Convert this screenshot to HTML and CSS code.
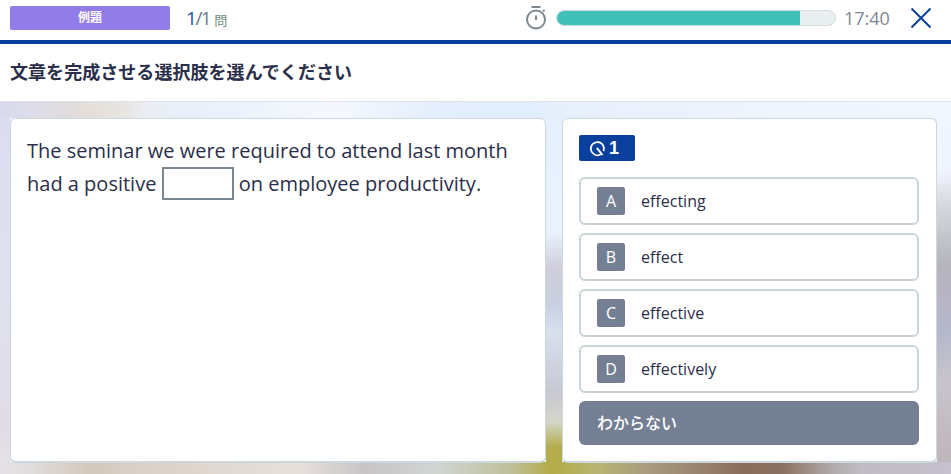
FILE: index.html
```html
<!DOCTYPE html>
<html lang="ja">
<head>
<meta charset="utf-8">
<title>例題</title>
<link rel="stylesheet" href="styles.css">
</head>
<body>
<header class="topbar">
  <div class="topbar-left">
    <div class="tag">例題</div>
    <div class="count"><span class="count-now">1</span><span class="count-total">/1</span><span class="count-unit">問</span></div>
  </div>
  <div class="topbar-right">
    <svg class="timer-icon" width="24" height="26" viewBox="0 0 24 26" fill="none" stroke="#7d8790" stroke-width="2">
      <path d="M7.500 2h9"/>
      <circle cx="12" cy="14.500" r="9"/>
      <path d="M12 10.500v4.500"/>
      <path d="M19 6.500l1.500-1.500"/>
    </svg>
    <div class="progress"><div class="progress-fill"></div></div>
    <div class="time">17:40</div>
    <svg class="close" width="22" height="22" viewBox="0 0 22 22" fill="none" stroke="#0b3f9d" stroke-width="2">
      <path d="M1.500 1.500l19 19M20.500 1.500l-19 19"/>
    </svg>
  </div>
</header>
<div class="title-bar"><h1 class="title">文章を完成させる選択肢を選んでください</h1></div>
<main class="stage">
  <section class="card question">
    <p class="sentence">The seminar we were required to attend last month had a positive <span class="blank"></span> on employee productivity.</p>
  </section>
  <section class="card answers">
    <div class="q-badge">
      <svg width="17" height="17" viewBox="0 0 17 17" fill="none" stroke="#fff" stroke-width="1.700">
        <path d="M11.800 14.300A6.600 6.600 0 1 1 14.500 11.200"/>
        <path d="M7.800 7.800l5.700 7.200" stroke-width="2"/>
      </svg>
      <span>1</span>
    </div>
    <div class="option"><span class="letter">A</span><span class="word">effecting</span></div>
    <div class="option"><span class="letter">B</span><span class="word">effect</span></div>
    <div class="option"><span class="letter">C</span><span class="word">effective</span></div>
    <div class="option"><span class="letter">D</span><span class="word">effectively</span></div>
    <div class="unknown">わからない</div>
  </section>
</main>
</body>
</html>
```
FILE: styles.css
```css
* { box-sizing: border-box; }
html, body { height: 100%; }
body {
  margin: 0;
  height: 474px;
  overflow: hidden;
  display: flex;
  flex-direction: column;
  font-family: "Open Sans", "Noto Sans CJK JP", sans-serif;
  color: #2b2f4a;
  background: #fff;
}
.topbar {
  height: 44px;
  flex: none;
  border-bottom: 4px solid #0b3f9d;
  display: flex;
  align-items: center;
  justify-content: space-between;
  padding: 0 10px 5px 10px;
}
.topbar-left { display: flex; align-items: center; }
.tag {
  width: 160px;
  height: 24px;
  border-radius: 2px;
  background: #917ce8;
  color: #fff;
  font-size: 12px;
  font-weight: 700;
  line-height: 24px;
  text-align: center;
}
.count { margin-left: 16px; display: flex; align-items: baseline; letter-spacing: -1.500px; }
.count-now { font-size: 19px; font-weight: 500; color: #1a54a8; }
.count-total { font-size: 19px; color: #6b7a88; }
.count-unit { font-size: 13px; color: #6f8a80; margin-left: 4px; letter-spacing: 0; }
.topbar-right { display: flex; align-items: center; }
.timer-icon { margin-right: 8px; }
.progress {
  width: 280px;
  height: 16px;
  border-radius: 8px;
  background: #e9eef0;
  border: 1px solid #d6dee1;
  overflow: hidden;
  margin-top: 1px;
}
.progress-fill { width: 244px; height: 16px; margin: -1px 0 0 -1px; background: #3fc0b8; }
.time { margin-left: 8px; font-size: 18px; color: #7d8790; width: 46px; white-space: nowrap; }
.close { margin: 0 9px 0 20px; }
.title-bar {
  height: 58px;
  flex: none;
  border-bottom: 1px solid #dfe4ea;
  display: flex;
  align-items: center;
  padding: 0 10px 4px;
  background: #fff;
}
.title { margin: 0; font-size: 18px; font-weight: 700; color: #2b2f4a; white-space: nowrap; letter-spacing: 0.050px; }
.stage {
  flex: 1;
  display: flex;
  gap: 16px;
  padding: 16px 14px 11px 10px;
  background-color: #eaf1fb;
  background-repeat: no-repeat;
  background-image:
    linear-gradient(90deg, #d9d9ee 0, #dddcea 30px, #e0dcdc 70px, #e6dfd8 95px, #e8e5e2 125px, #eaeef4 150px, #e8f0fb 200px, #f2f6fd 290px, #f4f8fe 340px, #e4eefc 430px, #e2eefd 520px, #e8f0fc 600px, #f0f5fd 780px, #f2f6fe 951px),
    linear-gradient(90deg, #e4e2e6 0, #e0dcdc 30px, #d4c8bc 90px, #d9cfc6 130px, #ddd4cc 180px, #e6e0dc 300px, #c8c4c6 365px, #d0d5d2 436px, #bfc09a 510px, #b3ab45 552px, #b8b570 594px, #a89a80 650px, #8a6c5c 745px, #8a7060 782px, #b0a8a8 830px, #c0bcc4 860px, #c4c0cc 951px),
    linear-gradient(180deg, #dcdcf0 0, #e0e0ee 200px, #e0dce6 330px, #e8e4e4 372px),
    linear-gradient(180deg, #e4effd 0, #eaf3fd 130px, #cfcdd9 166px, #c8d0e0 200px, #d8e0ee 230px, #c8c8d2 290px, #d4d6c8 320px, #b4ae50 344px, #b3ab45 372px),
    linear-gradient(180deg, #f2f6fe 0, #f0f4fc 70px, #d8dae2 100px, #b5b5bd 160px, #b8b4c4 190px, #b5b8cc 230px, #c8c4cc 280px, #bcb4b8 372px);
  background-size: 100% 16px, 100% 12px, 10px 100%, 16px 100%, 14px 100%;
  background-position: 0 0, 0 100%, 0 0, 546px 0, 100% 0;
}
.card {
  background: #fff;
  border: 1px solid #ccd8de;
  border-bottom-width: 2px;
  border-radius: 6px;
}
.question { width: 536px; padding: 15px 16px; }
.sentence { margin: 0; font-size: 20px; line-height: 33px; color: #2b2f4a; }
.blank {
  display: inline-block;
  width: 72px;
  height: 33px;
  border: 2px solid #7a8793;
  vertical-align: -9px;
}
.answers { width: 375px; padding: 16px 17px 0 16px; }
.q-badge {
  width: 56px;
  height: 26px;
  background: #0b3f9d;
  border-radius: 2px;
  color: #fff;
  display: flex;
  align-items: center;
  gap: 3px;
  padding-left: 10px;
  font-size: 18px;
  font-weight: 700;
  font-family: "Liberation Sans", sans-serif;
  margin-bottom: 16px;
}
.option {
  height: 48px;
  border: 2px solid #c9d5d8;
  border-radius: 6px;
  display: flex;
  align-items: center;
  padding-left: 16px;
  margin-bottom: 8px;
  background: #fff;
}
.letter {
  width: 28px;
  height: 28px;
  background: #757f94;
  border-radius: 2px;
  color: #fff;
  font-size: 16px;
  line-height: 28px;
  text-align: center;
}
.word { margin-left: 16px; font-size: 16px; color: #2b2f4a; }
.unknown {
  height: 44px;
  margin-top: 8px;
  background: #757f94;
  border-radius: 6px;
  color: #fff;
  font-size: 16px;
  font-weight: 500;
  line-height: 44px;
  padding-left: 18px;
}
```
